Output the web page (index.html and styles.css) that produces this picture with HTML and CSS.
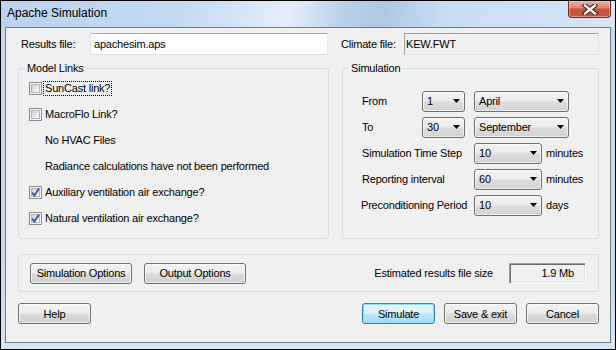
FILE: index.html
```html
<!DOCTYPE html>
<html lang="en">
<head>
    <meta charset="UTF-8">
    <meta name="viewport" content="width=device-width, initial-scale=1.0">
    <title>Apache Simulation</title>
    <link rel="stylesheet" href="styles.css">
</head>
<body>
    <div class="window">
        <div class="titlebar">
            <span class="title">Apache Simulation</span>
            <span class="close">
                <svg width="16" height="11" viewBox="0 0 16 11">
                    <path d="M3 1.5 L13 9.5 M13 1.5 L3 9.5" stroke="#4a1d14" stroke-width="4.6" stroke-linecap="square" fill="none"/>
                    <path d="M3 1.5 L13 9.5 M13 1.5 L3 9.5" stroke="#ffffff" stroke-width="2.4" stroke-linecap="square" fill="none"/>
                </svg>
            </span>
        </div>

        <div class="client">
            <div class="file-row">
                <span class="lbl-results">Results file:</span>
                <div class="textbox">apachesim.aps</div>
                <span class="lbl-climate">Climate file:</span>
                <div class="readonly">KEW.FWT</div>
            </div>

            <div class="groups">
                <fieldset class="group links">
                    <legend>Model Links</legend>
                    <div class="links-body">
                        <div class="row"><span class="check"></span><span class="cap focus">SunCast link?</span></div>
                        <div class="row"><span class="check"></span><span class="cap">MacroFlo Link?</span></div>
                        <div class="row note">No HVAC Files</div>
                        <div class="row note">Radiance calculations have not been performed</div>
                        <div class="row"><span class="check checked"><svg width="13" height="13" viewBox="0 0 13 13"><path d="M3.2 6.6 L5.4 9.6 L10 2.6" stroke="#3b58a8" stroke-width="1.9" fill="none"/></svg></span><span class="cap">Auxiliary ventilation air exchange?</span></div>
                        <div class="row"><span class="check checked"><svg width="13" height="13" viewBox="0 0 13 13"><path d="M3.2 6.6 L5.4 9.6 L10 2.6" stroke="#3b58a8" stroke-width="1.9" fill="none"/></svg></span><span class="cap">Natural ventilation air exchange?</span></div>
                    </div>
                </fieldset>

                <fieldset class="group sim">
                    <legend>Simulation</legend>
                    <div class="sim-grid">
                        <span>From</span>
                        <div class="combo day"><span>1</span><svg width="7" height="4" viewBox="0 0 7 4"><polygon points="0,0 7,0 3.5,4" fill="#000"/></svg></div>
                        <div class="combo month"><span>April</span><svg width="7" height="4" viewBox="0 0 7 4"><polygon points="0,0 7,0 3.5,4" fill="#000"/></svg></div>

                        <span>To</span>
                        <div class="combo day"><span>30</span><svg width="7" height="4" viewBox="0 0 7 4"><polygon points="0,0 7,0 3.5,4" fill="#000"/></svg></div>
                        <div class="combo month"><span>September</span><svg width="7" height="4" viewBox="0 0 7 4"><polygon points="0,0 7,0 3.5,4" fill="#000"/></svg></div>

                        <span class="wide">Simulation Time Step</span>
                        <div class="unit"><div class="combo step"><span>10</span><svg width="7" height="4" viewBox="0 0 7 4"><polygon points="0,0 7,0 3.5,4" fill="#000"/></svg></div>minutes</div>

                        <span class="wide">Reporting interval</span>
                        <div class="unit"><div class="combo step"><span>60</span><svg width="7" height="4" viewBox="0 0 7 4"><polygon points="0,0 7,0 3.5,4" fill="#000"/></svg></div>minutes</div>

                        <span class="wide pre">Preconditioning Period</span>
                        <div class="unit"><div class="combo step"><span>10</span><svg width="7" height="4" viewBox="0 0 7 4"><polygon points="0,0 7,0 3.5,4" fill="#000"/></svg></div>days</div>
                    </div>
                </fieldset>
            </div>

            <div class="options-bar">
                <button class="btn opt">Simulation Options</button>
                <button class="btn opt">Output Options</button>
                <span class="estimate">Estimated results file size</span>
                <div class="size-box">1.9 Mb</div>
            </div>

            <div class="actions">
                <button class="btn">Help</button>
                <button class="btn default">Simulate</button>
                <button class="btn">Save &amp; exit</button>
                <button class="btn">Cancel</button>
            </div>
        </div>
    </div>
</body>
</html>
```

FILE: styles.css
```css
body {
    margin: 0;
    font-family: "Liberation Sans", Arial, sans-serif;
    font-size: 11px;
    letter-spacing: -0.2px;
    color: #000;
    white-space: nowrap;
}
.window {
    width: 616px;
    height: 350px;
    box-sizing: border-box;
    border: 1px solid #000;
    padding: 0 4px 6px 4px;
    background: linear-gradient(180deg, #c3d9f1 0%, #c7dcf2 85%, #d8e7f7 100%);
}
.titlebar {
    height: 26px;
    margin: 0 -4px;
    display: flex;
    align-items: flex-start;
    background: linear-gradient(100deg, #bad2ed 0%, #c5daf1 30%, #dae8f7 42%, #e4eef9 47%, #b9cfe8 56%, #aec7e3 62%, #c8dcf2 72%, #d6e6f6 100%);
}
.title {
    font-size: 12px;
    letter-spacing: 0;
    line-height: 15px;
    padding: 5px 0 0 6px;
}
.close {
    margin-left: auto;
    margin-right: 4px;
    width: 43px;
    height: 17px;
    box-sizing: border-box;
    border: 1px solid #6b2a1d;
    border-top: none;
    border-radius: 0 0 4px 4px;
    background: linear-gradient(180deg, #e8b1a4 0%, #d98a76 40%, #c4503a 55%, #c75a42 100%);
    box-shadow: inset 0 0 0 1px rgba(255, 220, 210, 0.45);
    display: flex;
    align-items: center;
    justify-content: center;
}
.client {
    height: 316px;
    box-sizing: border-box;
    border: 1px solid #6d7d90;
    background-color: #f0f0f0;
}
.file-row {
    display: flex;
    align-items: center;
    height: 22px;
    margin-top: 5px;
}
.lbl-results {
    width: 69px;
    padding-left: 15px;
}
.textbox {
    width: 238px;
    height: 22px;
    box-sizing: border-box;
    background-color: #fff;
    border: 1px solid #dbdfe6;
    border-top-color: #abadb3;
    border-right-color: #e3e9ef;
    padding-left: 3px;
    line-height: 20px;
}
.lbl-climate {
    width: 63px;
    margin-left: 13px;
}
.readonly {
    width: 195px;
    height: 22px;
    box-sizing: border-box;
    border: 1px solid #e3e3e3;
    border-top-color: #a0a0a0;
    border-left-color: #a0a0a0;
    padding-left: 1px;
    line-height: 20px;
}
.groups {
    display: flex;
    gap: 13px;
    margin-top: 6px;
    padding-left: 12px;
}
.group {
    margin: 0;
    padding: 0;
    height: 178px;
    box-sizing: border-box;
    border: 1px solid #d5dfe5;
    border-radius: 3px;
}
.group legend {
    margin-left: 6px;
    padding: 0 2px;
    line-height: 14px;
}
.links {
    width: 311px;
}
.sim {
    width: 257px;
}
.links-body {
    padding-left: 10px;
}
.row {
    height: 26px;
    display: flex;
    align-items: center;
    gap: 2px;
}
.row.note {
    padding-left: 16px;
}
.check {
    position: relative;
    width: 13px;
    height: 13px;
    box-sizing: border-box;
    border: 1px solid #8e8f8f;
    background-color: #f4f4f4;
    padding: 1px;
}
.check::before {
    content: "";
    display: block;
    width: 9px;
    height: 9px;
    box-sizing: border-box;
    border: 1px solid #b4b6b8;
    background: linear-gradient(135deg, #cdd0d4 0%, #e9eaeb 55%, #fbfbfb 100%);
}
.check svg {
    position: absolute;
    left: -1px;
    top: -1px;
}
.cap {
    display: inline-block;
    line-height: 13px;
    padding: 0 1px;
}
.focus {
    outline: 1px dotted #000;
}
.sim-grid {
    display: grid;
    grid-template-columns: 51px 43px auto;
    grid-auto-rows: 26px;
    column-gap: 9px;
    align-items: center;
    padding: 13px 0 0 19px;
}
.wide {
    grid-column: 1 / 3;
}
.pre {
    margin-left: -1px;
}
.unit {
    display: flex;
    align-items: center;
    gap: 4px;
}
.combo {
    height: 21px;
    box-sizing: border-box;
    border: 1px solid #707070;
    border-radius: 3px;
    background: linear-gradient(180deg, #f4f4f4 0%, #ebebeb 48%, #dddddd 52%, #d3d3d3 100%);
    box-shadow: inset 0 0 0 1px rgba(255, 255, 255, 0.6);
    display: flex;
    align-items: center;
    justify-content: space-between;
    padding: 0 4px 0 4px;
}
.combo.day {
    width: 43px;
}
.combo.month {
    width: 95px;
}
.combo.step {
    width: 68px;
}
.options-bar {
    display: flex;
    align-items: center;
    width: 581px;
    height: 38px;
    box-sizing: border-box;
    margin: 15px 0 0 12px;
    padding: 0 12px 0 11px;
    border: 1px solid #d5dfe5;
    border-radius: 3px;
}
.btn {
    height: 21px;
    width: 73px;
    box-sizing: border-box;
    border: 1px solid #707070;
    border-radius: 3px;
    background: linear-gradient(180deg, #f4f4f4 0%, #ebebeb 48%, #dddddd 52%, #cfcfcf 100%);
    box-shadow: inset 0 0 0 1px rgba(255, 255, 255, 0.7);
    font: inherit;
    letter-spacing: inherit;
    color: #000;
    padding: 0;
}
.btn.opt {
    width: 102px;
    margin-right: 12px;
}
.btn.default {
    border-color: #3c7fb1;
    background: linear-gradient(180deg, #eaf6fd 0%, #d9f0fc 48%, #bee6fd 52%, #a7d9f5 100%);
    box-shadow: inset 0 0 0 1px #8fdcf8;
}
.estimate {
    margin-left: auto;
}
.size-box {
    width: 77px;
    height: 21px;
    margin-left: 16px;
    box-sizing: border-box;
    border: 1px solid;
    border-color: #a0a0a0 #ffffff #ffffff #a0a0a0;
    box-shadow: inset 1px 1px 0 #696969, inset -1px -1px 0 #e3e3e3;
    text-align: right;
    padding-right: 11px;
    line-height: 19px;
}
.actions {
    display: flex;
    gap: 9px;
    margin-top: 11px;
    padding-left: 12px;
}
.actions .btn:first-child {
    margin-right: auto;
}
.actions .btn:last-child {
    margin-right: 11px;
}
```
